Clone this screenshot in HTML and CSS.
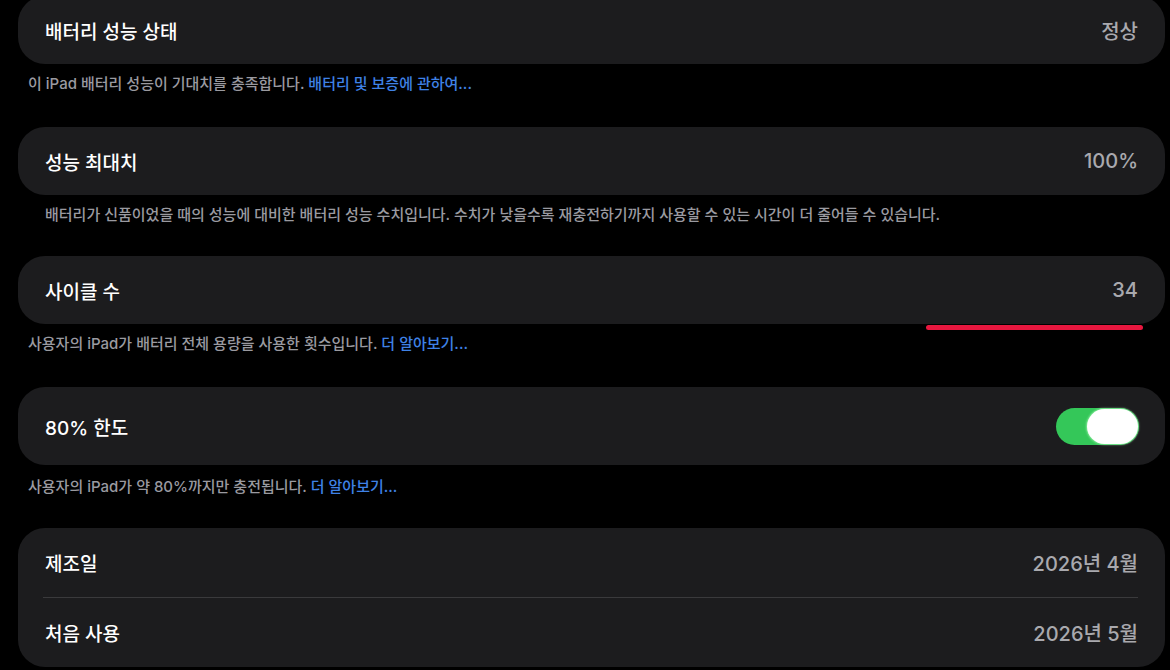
FILE: index.html
```html
<!DOCTYPE html>
<html lang="ko">
<head>
<meta charset="utf-8">
<link rel="stylesheet" href="styles.css">
</head>
<body>
<main class="page">
  <section class="card card-first">
    <div class="row">
      <span class="title">배터리 성능 상태</span>
      <span class="value">정상</span>
    </div>
  </section>
  <p class="note">이 iPad 배터리 성능이 기대치를 충족합니다. <span class="link">배터리 및 보증에 관하여...</span></p>

  <section class="card">
    <div class="row">
      <span class="title">성능 최대치</span>
      <span class="value">100%</span>
    </div>
  </section>
  <p class="note note-indent">배터리가 신품이었을 때의 성능에 대비한 배터리 성능 수치입니다. 수치가 낮을수록 재충전하기까지 사용할 수 있는 시간이 더 줄어들 수 있습니다.</p>

  <section class="card card-marked">
    <div class="row">
      <span class="title">사이클 수</span>
      <span class="value">34</span>
    </div>
    <span class="mark"></span>
  </section>
  <p class="note">사용자의 iPad가 배터리 전체 용량을 사용한 횟수입니다. <span class="link">더 알아보기...</span></p>

  <section class="card">
    <div class="row row-toggle">
      <span class="title">80% 한도</span>
      <span class="toggle"><span class="knob"></span></span>
    </div>
  </section>
  <p class="note note-last">사용자의 iPad가 약 80%까지만 충전됩니다. <span class="link">더 알아보기...</span></p>

  <section class="card card-group">
    <div class="row">
      <span class="title">제조일</span>
      <span class="value">2026년 4월</span>
    </div>
    <div class="sep"></div>
    <div class="row">
      <span class="title">처음 사용</span>
      <span class="value">2026년 5월</span>
    </div>
  </section>
</main>
</body>
</html>
```
FILE: styles.css
```css
html, body {
  margin: 0;
  padding: 0;
  background: #000;
}
body {
  font-family: Inter, "Noto Sans CJK KR", sans-serif;
  color: #fff;
  overflow: hidden;
}
.page {
  padding: 0 5px 0 18px;
  display: flex;
  flex-direction: column;
}
.card {
  background: #1c1c1e;
  border-radius: 27px;
  display: flex;
  flex-direction: column;
}
.card-first {
  margin-top: -4px;
}
.card-marked {
  position: relative;
}
.row {
  height: 68px;
  display: flex;
  align-items: center;
  justify-content: space-between;
  padding: 0 27px;
}
.card-group .row {
  height: 69px;
}
.row-toggle {
  height: 78px;
  padding-right: 26px;
}
.title {
  font-size: 19px;
  font-weight: 500;
  color: #fff;
}
.value {
  font-size: 20px;
  font-weight: 500;
  color: #a9a9ae;
}
.sep {
  height: 1px;
  background: #3a3a3c;
  margin: 0 27px 0 25px;
}
.note {
  margin: 10px 0 33px;
  padding-left: 10px;
  font-size: 15px;
  line-height: 20px;
  color: #9a9aa0;
  font-weight: 500;
}
.note-indent {
  margin-bottom: 31px;
  padding-left: 27px;
}
.note-last {
  margin-top: 12px;
  margin-bottom: 31px;
}
.link {
  color: #3f82e6;
}
.mark {
  position: absolute;
  right: 22px;
  bottom: -6px;
  width: 217px;
  height: 5px;
  border-radius: 3px;
  background: #e8173f;
}
.toggle {
  width: 83px;
  height: 37px;
  border-radius: 19px;
  background: #34c759;
  display: flex;
  align-items: center;
  justify-content: flex-end;
  padding-right: 1px;
  box-sizing: border-box;
}
.knob {
  width: 51px;
  height: 35px;
  border-radius: 18px;
  background: #fff;
  box-shadow: 0 0 2px 1px rgba(180, 255, 190, 0.6);
}
```
